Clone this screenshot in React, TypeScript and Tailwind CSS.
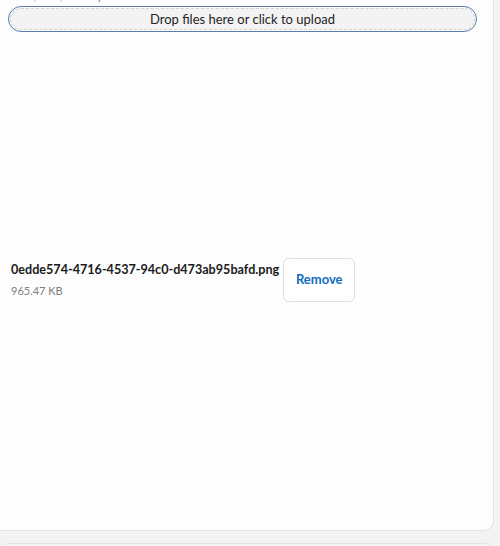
import React from 'react';

export default function App() {
  const file = { name: '0edde574-4716-4537-94c0-d473ab95bafd.png', size: '965.47 KB' };

  return (
    <div className="h-[546px] w-[500px] overflow-hidden bg-[#f3f3f3] font-['Lato',sans-serif]">
      <div className="-ml-px h-[531px] w-[495px] overflow-hidden rounded-br-[10px] border border-t-0 border-[#e3e3e3] bg-[#fdfdfd]">
        <div className="-mt-[11px] pl-[8px] text-[12px] leading-[14px] text-[#8a8a8a]">PNG, JPG, PDF up to 10MB each</div>

        <div className="ml-[8px] mt-[3px] w-[469px] rounded-full border border-[#5a7aab] p-px">
          <div className="flex h-[22px] items-center justify-center rounded-full border border-dashed border-[#d2d2d2] bg-[#f3f3f3] pt-px text-[13px] text-[#242424]">
            Drop files here or click to upload
          </div>
        </div>

        <div className="mt-[226px] flex items-center gap-[4px] pl-[11px]">
          <div className="flex flex-col">
            <span className="text-[12.6px] font-bold leading-[18px] text-[#1a1a1a]">{file.name}</span>
            <span className="mt-[4px] text-[11px] leading-[16px] text-[#808080]">{file.size}</span>
          </div>
          <button className="h-[44px] w-[72px] rounded-[6px] border border-[#e0e0e0] bg-white text-[13px] font-bold text-[#0f6cbd]">
            Remove
          </button>
        </div>
      </div>
      <div className="mt-[12px] h-[20px] w-[495px] rounded-t-[10px] border border-[#e3e3e3] bg-[#f7f7f7]" />
    </div>
  );
}
